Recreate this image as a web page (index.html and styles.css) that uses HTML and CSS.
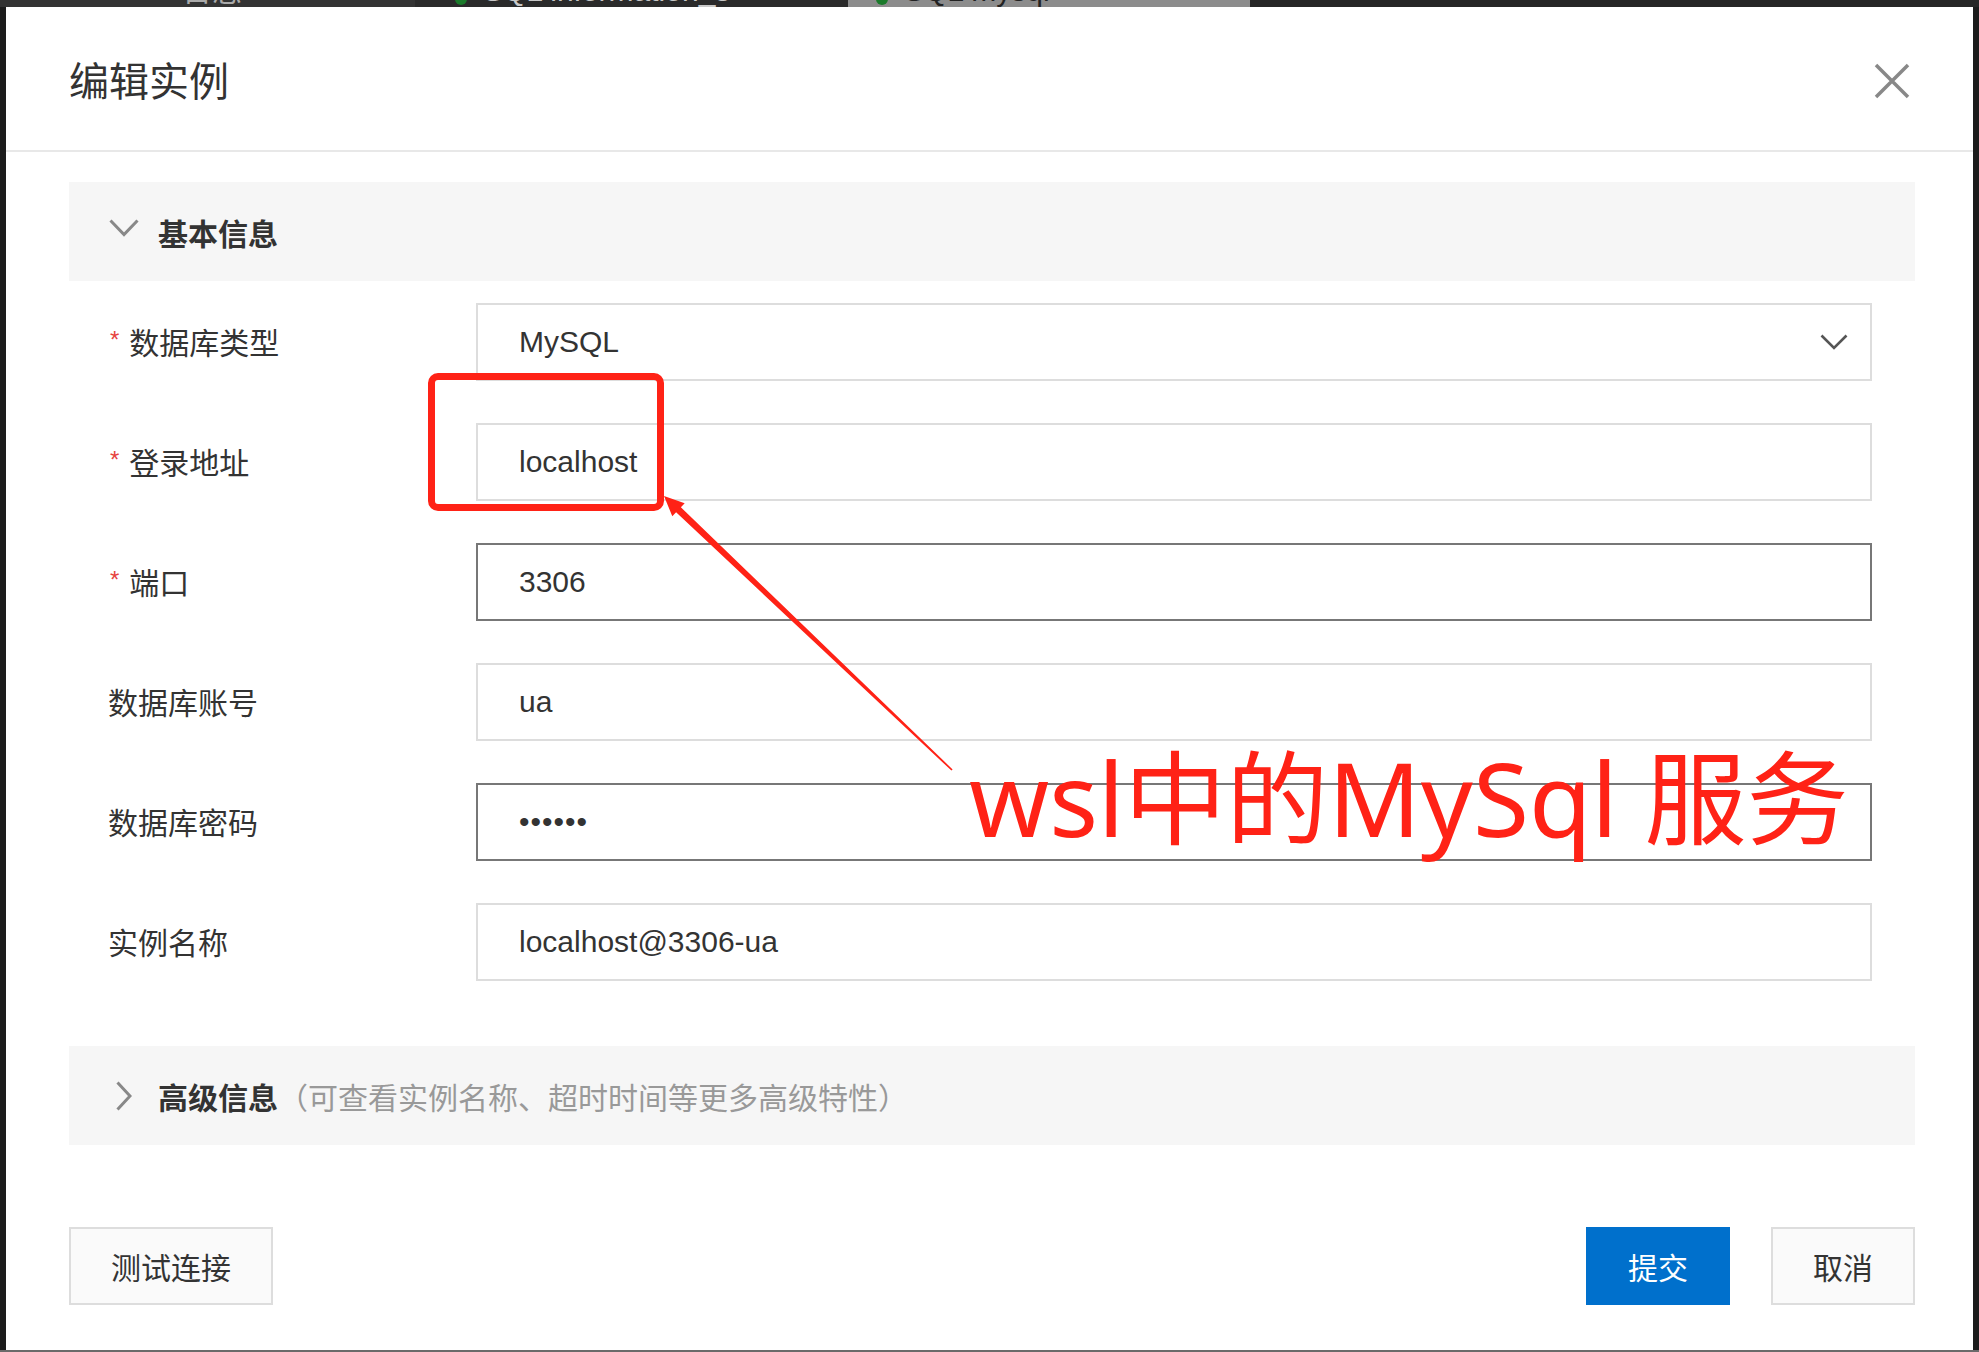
FILE: index.html
```html
<!DOCTYPE html>
<html lang="zh-CN">
<head>
    <meta charset="UTF-8">
    <meta name="viewport" content="width=device-width, initial-scale=1.0">
    <title>编辑实例</title>
    <link rel="stylesheet" href="styles.css">
</head>
<body>
    <div class="tabbar">
        <div class="tab tab-plain">日志</div>
        <div class="tab"><span class="dot"></span>SQL information_s<span class="tab-x">×</span></div>
        <div class="tab tab-active"><span class="dot"></span>SQL mysql<span class="tab-x">×</span></div>
    </div>

    <div class="modal">
        <div class="modal-header">
            <h1>编辑实例</h1>
            <button class="close-btn" type="button" aria-label="关闭">
                <svg width="36" height="36" viewBox="0 0 36 36">
                    <path d="M2 2 L34 34 M34 2 L2 34" stroke="#888" stroke-width="3.5" fill="none"/>
                </svg>
            </button>
        </div>

        <div class="modal-body">
            <div class="section-bar">
                <span class="chev">
                    <svg width="30" height="18" viewBox="0 0 30 18">
                        <path d="M1.5 1.5 L15 15.5 L28.5 1.5" stroke="#888" stroke-width="3" fill="none"/>
                    </svg>
                </span>
                <span class="section-title">基本信息</span>
            </div>

            <form class="form">
                <div class="form-row">
                    <label><span class="req">*</span>数据库类型</label>
                    <div class="select">
                        <span>MySQL</span>
                        <svg width="28" height="16" viewBox="0 0 28 16">
                            <path d="M1.5 1.5 L14 14 L26.5 1.5" stroke="#555" stroke-width="2.6" fill="none"/>
                        </svg>
                    </div>
                </div>
                <div class="form-row">
                    <label><span class="req">*</span>登录地址</label>
                    <input type="text" value="localhost">
                </div>
                <div class="form-row">
                    <label><span class="req">*</span>端口</label>
                    <input type="text" class="active" value="3306">
                </div>
                <div class="form-row">
                    <label>数据库账号</label>
                    <input type="text" value="ua">
                </div>
                <div class="form-row">
                    <label>数据库密码</label>
                    <input type="password" class="active pwd" value="123456">
                </div>
                <div class="form-row">
                    <label>实例名称</label>
                    <input type="text" value="localhost@3306-ua">
                </div>
            </form>

            <div class="section-bar advanced">
                <span class="chev">
                    <svg width="16" height="30" viewBox="0 0 16 30">
                        <path d="M1.5 1.5 L14 15 L1.5 28.5" stroke="#888" stroke-width="3" fill="none"/>
                    </svg>
                </span>
                <span class="section-title">高级信息</span>
                <span class="section-hint">（可查看实例名称、超时时间等更多高级特性）</span>
            </div>
        </div>

        <div class="modal-footer">
            <button class="btn btn-test" type="button">测试连接</button>
            <div class="footer-right">
                <button class="btn btn-primary" type="button">提交</button>
                <button class="btn" type="button">取消</button>
            </div>
        </div>
    </div>
    <div class="page-bottom"></div>

    <!-- annotation layer -->
    <div class="mark-box"></div>
    <svg class="mark-arrow" width="1979" height="1352" viewBox="0 0 1979 1352">
        <polygon fill="#ff2216" points="664,496 684.7,503.3 680.9,507.3 952.6,769.4 951.4,770.6 676.1,512.3 672.3,516.3"/>
    </svg>
    <div class="mark-text">wsl中的MySql 服务</div>
</body>
</html>
```

FILE: styles.css
```css
* {
    margin: 0;
    padding: 0;
    box-sizing: border-box;
    font-family: 'Liberation Sans', 'Noto Sans CJK SC', sans-serif;
}

body {
    width: 1979px;
    height: 1352px;
    background-color: #1c1c1c;
    color: #333;
    overflow: hidden;
}

/* background tabs, only their lower edge shows */
.tabbar {
    height: 7px;
    display: flex;
    align-items: flex-end;
    overflow: hidden;
    background-color: #262626;
}

.tab {
    height: 40px;
    flex-shrink: 0;
    display: flex;
    align-items: flex-end;
    padding: 0 0 0 40px;
    width: 433px;
    background-color: #2a2a2a;
    color: #c8c8c8;
    font-size: 30px;
    line-height: 32px;
}

.tab-plain {
    width: 415px;
    padding-left: 182px;
    background-color: #333;
    color: #aaa;
}

.tab-active {
    width: 402px;
    padding-left: 28px;
    background-color: #8c8c8c;
    color: #222;
}

.dot {
    width: 12px;
    height: 12px;
    border-radius: 50%;
    background-color: #1a7a2a;
    margin: 0 16px 2px 0;
}

.tab-x {
    margin-left: auto;
    margin-right: 30px;
}

.modal {
    height: 1343px;
    margin: 0 6px;
    background-color: #fff;
    display: flex;
    flex-direction: column;
}

.page-bottom {
    height: 2px;
    background-color: #6a6a6a;
}

.modal-header {
    height: 145px;
    padding: 0 63px 0 63px;
    display: flex;
    align-items: center;
    justify-content: space-between;
    border-bottom: 2px solid #e8e8e8;
}

.modal-header h1 {
    font-size: 40px;
    font-weight: normal;
    color: #333;
}

.close-btn {
    width: 36px;
    height: 36px;
    border: none;
    background: none;
    cursor: pointer;
    margin-top: 4px;
}

.close-btn svg {
    display: block;
}

.modal-body {
    padding: 30px 58px 0 63px;
}

.section-bar {
    height: 99px;
    background-color: #f6f6f6;
    display: flex;
    align-items: center;
    padding-left: 40px;
}

.chev {
    width: 30px;
    display: flex;
    justify-content: center;
    margin-right: 19px;
}

.chev svg {
    display: block;
}

.section-bar:first-child .chev {
    margin-top: -8px;
}

.section-title {
    font-size: 30px;
    font-weight: bold;
    color: #333;
}

.section-hint {
    font-size: 30px;
    color: #999;
}

.form {
    margin-top: 22px;
    display: flex;
    flex-direction: column;
    gap: 42px;
    padding: 0 43px 0 39px;
}

.form-row {
    display: flex;
    align-items: center;
}

.form-row label {
    width: 368px;
    flex-shrink: 0;
    font-size: 30px;
    color: #333;
    margin-top: -3px;
}

.req {
    color: #e64340;
    font-size: 24px;
    margin: 0 10px 0 2px;
    vertical-align: 6px;
}

.form-row input,
.select {
    flex: 1;
    height: 78px;
    border: 2px solid #ddd;
    padding: 0 41px;
    font-size: 30px;
    color: #333;
    background-color: #fff;
    outline: none;
}

.form-row input.active {
    border-color: #777;
}

.form-row input.pwd {
    letter-spacing: 1px;
}

.select {
    display: flex;
    align-items: center;
    justify-content: space-between;
    padding-right: 22px;
}

.advanced {
    margin-top: 65px;
}

.modal-footer {
    margin-top: 82px;
    padding: 0 58px 0 63px;
    display: flex;
    justify-content: space-between;
}

.footer-right {
    display: flex;
    gap: 41px;
}

.btn {
    height: 78px;
    width: 144px;
    font-size: 30px;
    color: #333;
    background-color: #fafafa;
    border: 2px solid #ddd;
    cursor: pointer;
}

.btn-test {
    width: 204px;
}

.btn-primary {
    background-color: #0070cc;
    border-color: #0070cc;
    color: #fff;
}

/* red annotations drawn over the dialog */
.mark-box {
    position: absolute;
    left: 428px;
    top: 373px;
    width: 236px;
    height: 138px;
    border: 7px solid #ff2216;
    border-radius: 10px;
}

.mark-arrow {
    position: absolute;
    left: 0;
    top: 0;
    pointer-events: none;
}

.mark-text {
    position: absolute;
    left: 969px;
    top: 747px;
    font-family: 'Noto Sans', 'Noto Sans CJK SC', sans-serif;
    font-size: 102px;
    line-height: 1;
    color: #ff2216;
    white-space: nowrap;
}
```
